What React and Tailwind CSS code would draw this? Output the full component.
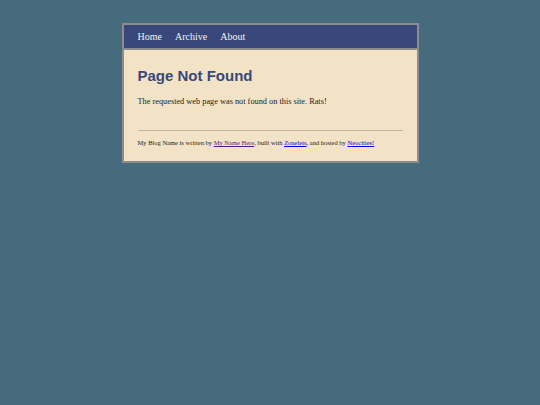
export default function App() {
  return (
    <div className="min-h-[405px] w-full bg-[#466b7c] pt-[23px]">
      <div className="mx-auto w-[297px] border-2 border-[#8c8c8c] bg-[#f2e3c6]">
        <nav
          className="flex h-[25px] items-center gap-[13px] border-b-2 border-[#8c8c8c] bg-[#38487a] px-[14px] text-[10px] text-[#f2f2f2]"
          style={{ fontFamily: '"Liberation Serif", serif' }}
        >
          <span>Home</span>
          <span>Archive</span>
          <span>About</span>
        </nav>
        <div className="px-[14px] pt-[16px] pb-[13px]">
          <h1
            className="text-[15px] font-bold leading-[20px] text-[#38487a]"
            style={{ fontFamily: '"Liberation Sans", Arial, sans-serif' }}
          >
            Page Not Found
          </h1>
          <p
            className="mt-[10px] text-[8.3px] leading-[12px] text-[#222]"
            style={{ fontFamily: '"Liberation Serif", serif' }}
          >
            The requested web page was not found on this site. Rats!
          </p>
          <hr className="mt-[22px] border-t border-[#bfb5a0]" />
          <p
            className="mt-[7px] whitespace-nowrap text-[6.5px] leading-[10px] text-[#222]"
            style={{ fontFamily: '"Liberation Serif", serif' }}
          >
            My Blog Name is written by{" "}
            <a href="#" className="text-[#551a8b] underline">My Name Here</a>, built with{" "}
            <a href="#" className="text-[#0000ee] underline">Zonelets</a>, and hosted by{" "}
            <a href="#" className="text-[#0000ee] underline">Neocities!</a>
          </p>
        </div>
      </div>
    </div>
  );
}
